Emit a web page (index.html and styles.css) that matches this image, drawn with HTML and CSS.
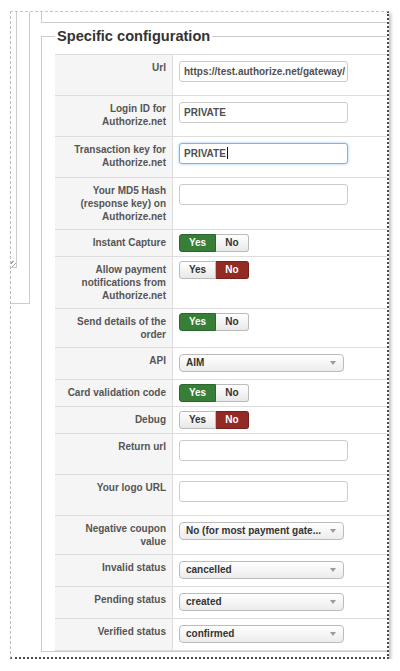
FILE: index.html
```html
<!DOCTYPE html>
<html lang="en">
<head>
<meta charset="utf-8">
<title>Specific configuration</title>
<link rel="stylesheet" href="styles.css">
</head>
<body>
<div class="frame">
  <div class="side">
    <div class="side-box">
      <div class="side-textarea"><span class="grip"></span></div>
    </div>
  </div>
  <div class="main">
    <div class="prev-box"></div>
    <fieldset class="config">
      <legend>Specific configuration</legend>
      <table class="params">
        <tr><th class="label">Url</th><td class="value"><div class="field">https://test.authorize.net/gateway/</div></td></tr>
        <tr><th class="label">Login ID for Authorize.net</th><td class="value"><div class="field">PRIVATE</div></td></tr>
        <tr><th class="label">Transaction key for Authorize.net</th><td class="value"><div class="field focus">PRIVATE<span class="caret"></span></div></td></tr>
        <tr><th class="label">Your MD5 Hash (response key) on Authorize.net</th><td class="value"><div class="field"></div></td></tr>
        <tr><th class="label">Instant Capture</th><td class="value tog"><div class="toggle"><span class="yes on">Yes</span><span class="no">No</span></div></td></tr>
        <tr><th class="label">Allow payment notifications from Authorize.net</th><td class="value tog"><div class="toggle"><span class="yes">Yes</span><span class="no on">No</span></div></td></tr>
        <tr><th class="label">Send details of the order</th><td class="value tog"><div class="toggle"><span class="yes on">Yes</span><span class="no">No</span></div></td></tr>
        <tr><th class="label">API</th><td class="value"><div class="select"><span>AIM</span><i class="arrow"></i></div></td></tr>
        <tr><th class="label">Card validation code</th><td class="value tog"><div class="toggle"><span class="yes on">Yes</span><span class="no">No</span></div></td></tr>
        <tr><th class="label">Debug</th><td class="value tog"><div class="toggle"><span class="yes">Yes</span><span class="no on">No</span></div></td></tr>
        <tr><th class="label">Return url</th><td class="value"><div class="field"></div></td></tr>
        <tr><th class="label">Your logo URL</th><td class="value"><div class="field"></div></td></tr>
        <tr><th class="label">Negative coupon value</th><td class="value"><div class="select"><span>No (for most payment gate...</span><i class="arrow"></i></div></td></tr>
        <tr><th class="label">Invalid status</th><td class="value"><div class="select"><span>cancelled</span><i class="arrow"></i></div></td></tr>
        <tr><th class="label">Pending status</th><td class="value"><div class="select"><span>created</span><i class="arrow"></i></div></td></tr>
        <tr><th class="label">Verified status</th><td class="value"><div class="select"><span>confirmed</span><i class="arrow"></i></div></td></tr>
      </table>
    </fieldset>
  </div>
</div>
</body>
</html>
```

FILE: styles.css
```css
html, body {
  margin: 0;
  background: #fff;
  font-family: "Liberation Sans", Arial, sans-serif;
}

.frame {
  display: flex;
  margin: 11px 0 0 10px;
  width: 376px;
  height: 645px;
  overflow: hidden;
  background: #fff;
  border-top: 1px dashed #c6c6c6;
  border-left: 1px dashed #bcbcbc;
  border-right: 2px dotted #4a4a4a;
  border-bottom: 2px dotted #4a4a4a;
  box-shadow: 2px 2px 3px rgba(0, 0, 0, 0.25);
}

.side {
  flex: none;
  width: 30px;
}

.side-box {
  width: 18px;
  height: 291px;
  border-right: 1px solid #ccc;
  border-bottom: 1px solid #ccc;
}

.side-textarea {
  position: relative;
  width: 5px;
  height: 255px;
  border-right: 1px solid #ccc;
  border-bottom: 1px solid #ccc;
}

.grip {
  position: absolute;
  right: 0;
  bottom: 0;
  width: 6px;
  height: 6px;
  background: repeating-linear-gradient(135deg, transparent 0 2px, #a0a0a0 2px 3px);
}

.main {
  flex: none;
  width: 360px;
}

.prev-box {
  height: 10px;
  border-left: 1px solid #ccc;
  border-bottom: 1px solid #ccc;
}

.config {
  margin: 5px 0 0;
  padding: 0 0 0 13px;
  border: 1px solid #ccc;
  min-width: 0;
}

.config legend {
  padding: 0 2px;
  font-size: 14.6px;
  font-weight: bold;
  line-height: 17px;
  color: #333;
}

.params {
  margin-top: 9px;
  width: 340px;
  table-layout: fixed;
  border-collapse: separate;
  border-spacing: 0;
  border-top: 1px solid #ddd;
}

.label {
  width: 105px;
  padding: 6px;
  background: #f5f5f5;
  border-right: 1px solid #ddd;
  border-bottom: 1px solid #ddd;
  text-align: right;
  vertical-align: top;
  font-size: 10px;
  font-weight: bold;
  line-height: 13px;
  color: #555;
}

.value {
  padding: 6px;
  border-bottom: 1px solid #ddd;
  vertical-align: top;
  font-size: 10px;
  line-height: 13px;
}

.value.tog {
  padding: 4px 6px;
}

.field {
  box-sizing: border-box;
  width: 169px;
  height: 21px;
  margin-bottom: 7px;
  padding: 0 2px 0 4px;
  border: 1px solid #ccc;
  border-radius: 3px;
  background: #fff;
  font-size: 10px;
  font-weight: bold;
  line-height: 19px;
  color: #505050;
  white-space: nowrap;
  overflow: hidden;
}

.field.focus {
  border-color: #7fb4e6;
  box-shadow: 0 0 3px rgba(82, 168, 236, 0.6);
}

.caret {
  display: inline-block;
  width: 1px;
  height: 12px;
  margin-left: 1px;
  background: #111;
  vertical-align: -2px;
}

.toggle {
  display: flex;
  width: 70px;
}

.toggle span {
  box-sizing: border-box;
  height: 18px;
  border: 1px solid #bbb;
  background: linear-gradient(#fff, #e8e8e8);
  font-size: 10px;
  font-weight: bold;
  line-height: 16px;
  text-align: center;
  color: #333;
}

.toggle .yes {
  width: 37px;
  border-radius: 3px 0 0 3px;
}

.toggle .no {
  width: 33px;
  border-left: none;
  border-radius: 0 3px 3px 0;
}

.toggle .yes.on {
  background: #377e36;
  border-color: #2b662b;
  color: #fff;
}

.toggle .no.on {
  background: #922a25;
  border-color: #77201c;
  color: #fff;
}

.select {
  box-sizing: border-box;
  display: flex;
  align-items: center;
  justify-content: space-between;
  width: 165px;
  height: 18px;
  margin-bottom: 1px;
  padding-left: 6px;
  border: 1px solid #bbb;
  border-radius: 4px;
  background: linear-gradient(#fff, #ececec);
  font-size: 10px;
  font-weight: bold;
  line-height: 16px;
  color: #333;
  white-space: nowrap;
}

.arrow {
  width: 0;
  height: 0;
  margin-right: 7px;
  border-left: 3px solid transparent;
  border-right: 3px solid transparent;
  border-top: 4px solid #9a9a9a;
}
```
